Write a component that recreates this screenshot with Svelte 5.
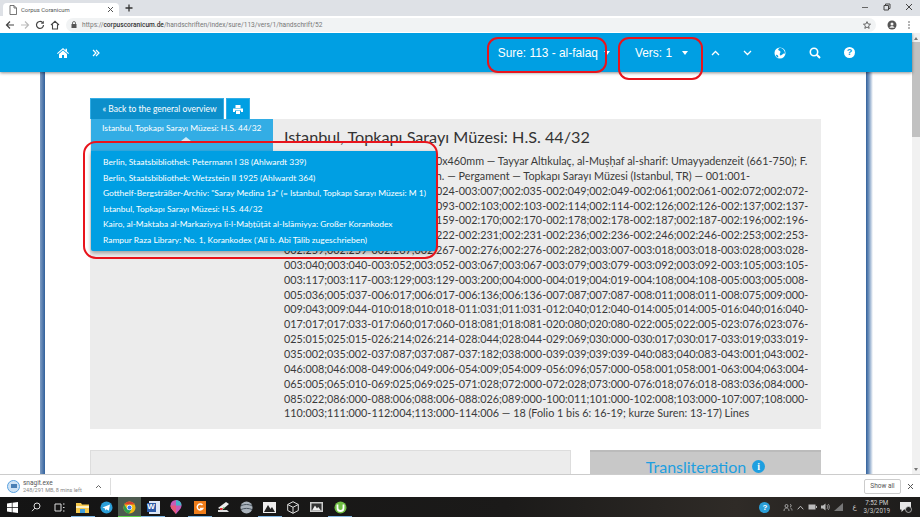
<script lang="ts">
const items = [
  "Berlin, Staatsbibliothek: Petermann I 38 (Ahlwardt 339)",
  "Berlin, Staatsbibliothek: Wetzstein II 1925 (Ahlwardt 364)",
  'Gotthelf-Bergsträßer-Archiv: "Saray Medina 1a" (= Istanbul, Topkapı Sarayı Müzesi: M 1)',
  "Istanbul, Topkapı Sarayı Müzesi: H.S. 44/32",
  "Kairo, al-Maktaba al-Markaziyya li-l-Maḫṭūṭāt al-Islāmiyya: Großer Korankodex",
  "Rampur Raza Library: No. 1, Korankodex (ʿAlī b. Abī Ṭālib zugeschrieben)",
];
const lines = [
  "H.S. 44/32 — 408 Blättern — 340x460mm — Tayyar Altıkulaç, al-Muṣḥaf al-sharif: Umayyadenzeit (661-750); F.",
  "1a-408b., Kufi, 7.-8. Jhd. n. Chr. n. — Pergament — Topkapı Sarayı Müzesi (Istanbul, TR) — 001:001-",
  "001:007;002:000-002:024;002:024-003:007;002:035-002:049;002:049-002:061;002:061-002:072;002:072-",
  "002:082;002:082-002:093;002:093-002:103;002:103-002:114;002:114-002:126;002:126-002:137;002:137-",
  "002:148;002:148-002:159;002:159-002:170;002:170-002:178;002:178-002:187;002:187-002:196;002:196-",
  "002:209;002:209-002:222;002:222-002:231;002:231-002:236;002:236-002:246;002:246-002:253;002:253-",
  "002:259;002:259-002:267;002:267-002:276;002:276-002:282;003:007-003:018;003:018-003:028;003:028-",
  "003:040;003:040-003:052;003:052-003:067;003:067-003:079;003:079-003:092;003:092-003:105;003:105-",
  "003:117;003:117-003:129;003:129-003:200;004:000-004:019;004:019-004:108;004:108-005:003;005:008-",
  "005:036;005:037-006:017;006:017-006:136;006:136-007:087;007:087-008:011;008:011-008:075;009:000-",
  "009:043;009:044-010:018;010:018-011:031;011:031-012:040;012:040-014:005;014:005-016:040;016:040-",
  "017:017;017:033-017:060;017:060-018:081;018:081-020:080;020:080-022:005;022:005-023:076;023:076-",
  "025:015;025:015-026:214;026:214-028:044;028:044-029:069;030:000-030:017;030:017-033:019;033:019-",
  "035:002;035:002-037:087;037:087-037:182;038:000-039:039;039:039-040:083;040:083-043:001;043:002-",
  "046:008;046:008-049:006;049:006-054:009;054:009-056:096;057:000-058:001;058:001-063:004;063:004-",
  "065:005;065:010-069:025;069:025-071:028;072:000-072:028;073:000-076:018;076:018-083:036;084:000-",
  "085:022;086:000-088:006;088:006-088:026;089:000-100:011;101:000-102:008;103:000-107:007;108:000-",
  "110:003;111:000-112:004;113:000-114:006 — 18 (Folio 1 bis 6: 16-19; kurze Suren: 13-17) Lines",
];
</script>

<div class="screen">
  <div class="tabstrip">
    <div class="tab">
      <svg width="8" height="10" viewBox="0 0 8 10"><path d="M1 .5h4l2.500 2.500v6.500h-6.500z M5 .5v2.500h2.500" fill="none" stroke="#555" stroke-width=".8"/></svg>
      <span class="tabtitle">Corpus Coranicum</span>
      <svg class="tabclose" width="7" height="7" viewBox="0 0 7 7"><path d="M1 1l5 5M6 1l-5 5" stroke="#555" stroke-width="1"/></svg>
    </div>
    <svg class="newtab" width="8" height="8" viewBox="0 0 8 8"><path d="M4 .5v7M.5 4h7" stroke="#333" stroke-width="1.300"/></svg>
    <div class="winctl">
      <svg width="8" height="8" viewBox="0 0 8 8"><path d="M1 4.500h6" stroke="#666" stroke-width="1"/></svg>
      <svg width="8" height="8" viewBox="0 0 8 8"><path d="M1 2.500h4.500v4.500h-4.500z M2.500 2.500v-1.500h4.500v4.500h-1.500" fill="none" stroke="#444" stroke-width="1"/></svg>
      <svg width="8" height="8" viewBox="0 0 8 8"><path d="M1 1l6 6M7 1l-6 6" stroke="#444" stroke-width="1"/></svg>
    </div>
  </div>

  <div class="toolbar">
    <svg width="10" height="10" viewBox="0 0 10 10"><path d="M9 5H1.500M5 1.500 1.500 5 5 8.500" fill="none" stroke="#444" stroke-width="1.200"/></svg>
    <svg width="10" height="10" viewBox="0 0 10 10"><path d="M1 5h7.500M5 1.500 8.500 5 5 8.500" fill="none" stroke="#bbb" stroke-width="1.200"/></svg>
    <svg width="10" height="10" viewBox="0 0 10 10"><path d="M8.500 5a3.500 3.500 0 1 1-1-2.500" fill="none" stroke="#444" stroke-width="1.200"/><path d="M8.800 .8v3h-3z" fill="#444"/></svg>
    <svg width="10" height="10" viewBox="0 0 10 10"><path d="M1 5 5 1.300 9 5M2.500 4.500v4.500h5v-4.500" fill="none" stroke="#444" stroke-width="1.100"/></svg>
    <div class="omnibox">
      <svg width="6" height="7" viewBox="0 0 6 7"><rect x=".5" y="3" width="5" height="4" fill="#555"/><path d="M1.500 3V2a1.500 1.500 0 0 1 3 0v1" fill="none" stroke="#555" stroke-width=".8"/></svg>
      <span class="url"><span class="scheme">https://</span><b>corpuscoranicum.de</b><span class="scheme">/handschriften/index/sure/113/vers/1/handschrift/52</span></span>
      <svg class="star" width="8" height="8" viewBox="0 0 10 10"><path d="M5 .8 6.300 3.700 9.400 4 7 6.100 7.700 9.200 5 7.600 2.300 9.200 3 6.100 .6 4 3.700 3.700z" fill="none" stroke="#444" stroke-width="1"/></svg>
    </div>
    <svg class="avatar" width="10" height="10" viewBox="0 0 10 10"><circle cx="5" cy="5" r="4.500" fill="#555"/><circle cx="5" cy="4" r="1.500" fill="#f5f5f5"/><path d="M2.300 7.800a3 3 0 0 1 5.400 0z" fill="#f5f5f5"/></svg>
    <svg width="4" height="10" viewBox="0 0 4 10"><circle cx="2" cy="2" r=".8" fill="#555"/><circle cx="2" cy="5" r=".8" fill="#555"/><circle cx="2" cy="8" r=".8" fill="#555"/></svg>
  </div>

  <div class="viewport">
    <div class="site">
      <nav class="nav">
        <svg class="home" width="12" height="10" viewBox="0 0 12 10"><path d="M6 0 0 5.200l.7.800L6 1.500 11.300 6l.7-.8-2-1.700V.8H8.500v1.400z M2 6 6 2.600 10 6v4H7V7H5v3H2z" fill="#fff"/></svg>
        <svg class="dbl" width="8" height="8" viewBox="0 0 8 8"><path d="M1 1l3 3-3 3M4 1l3 3-3 3" fill="none" stroke="#fff" stroke-width="1.200"/></svg>
        <span class="spacer"></span>
        <span class="sure">Sure: 113 - al-falaq</span>
        <i class="caret sure-caret"></i>
        <span class="vers">Vers: 1</span>
        <i class="caret vers-caret"></i>
        <svg class="chev-up" width="9" height="6" viewBox="0 0 9 6"><path d="M1 5l3.500-3.500L8 5" fill="none" stroke="#fff" stroke-width="1.300"/></svg>
        <svg class="chev-down" width="9" height="6" viewBox="0 0 9 6"><path d="M1 1l3.500 3.500L8 1" fill="none" stroke="#fff" stroke-width="1.300"/></svg>
        <svg class="globe" width="12" height="12" viewBox="0 0 12 12"><circle cx="6" cy="6" r="5.500" fill="#fff"/><path d="M6 .8C4 1.500 3.600 3 5 3.600c1.300.5 2 1.500 1 2.700-.6.800-.2 2 .7 2.200C8 8.300 9 6.300 10 6.500c.5 0 .8 0 1 .2C11 4 9 1 6 .8z M2 8c1-.5 2 .5 2.400 2 .1.500-.6.500-1 .2C2.600 9.500 2 8.800 2 8z" fill="#009fe3"/></svg>
        <svg class="search" width="12" height="12" viewBox="0 0 12 12"><circle cx="5" cy="5" r="3.700" fill="none" stroke="#fff" stroke-width="1.600"/><path d="M7.800 7.800 11 11" stroke="#fff" stroke-width="2"/></svg>
        <span class="help">?</span>
      </nav>

      <div class="columns">
        <div class="strip left"></div>
        <main class="page">
          <div class="actions">
            <button class="back"><span class="raquo">«</span> Back to the general overview</button>
            <button class="print" aria-label="print">
              <svg width="10" height="9" viewBox="0 0 10 9"><path d="M2.500 3V0h5v3z M0 3.500h10V7H8V5.500H2V7H0z M3 6h4v3H3z" fill="#fff"/></svg>
            </button>
          </div>
          <section class="panel">
            <div class="selector">
              <div class="selected">Istanbul, Topkapı Sarayı Müzesi: H.S. 44/32</div>
              <i class="notch"></i>
              <ul class="menu">
                {#each items as item}
                  <li>{item}</li>
                {/each}
              </ul>
            </div>
            <div class="info">
              <h1>Istanbul, Topkapı Sarayı Müzesi: H.S. 44/32</h1>
              {#each lines as line}
                <p>{line}</p>
              {/each}
            </div>
          </section>
          <div class="lower">
            <div class="facsimile"></div>
            <div class="translit">
              <span>Transliteration</span>
              <span class="info-dot">i</span>
            </div>
          </div>
        </main>
        <div class="strip right"></div>
      </div>
    </div>
    <div class="scrollbar">
      <i class="arrow up"></i>
      <div class="thumb"></div>
      <i class="arrow down"></i>
    </div>
    <div class="mark mark-sure"></div>
    <div class="mark mark-vers"></div>
    <div class="mark mark-menu"></div>
  </div>

  <div class="downloads">
    <div class="dl-icon"><i></i></div>
    <div class="dl-text">
      <span class="dl-name">snagit.exe</span>
      <span class="dl-size">248/291 MB, 8 mins left</span>
    </div>
    <svg width="7" height="5" viewBox="0 0 7 5"><path d="M1 4l2.500-2.500L6 4" fill="none" stroke="#666" stroke-width="1"/></svg>
    <span class="dl-sep"></span>
    <span class="spacer"></span>
    <span class="showall">Show all</span>
    <svg width="7" height="7" viewBox="0 0 7 7"><path d="M1 1l5 5M6 1l-5 5" stroke="#555" stroke-width="1"/></svg>
  </div>

  <footer class="taskbar">
    <div class="task"><svg width="11" height="11" viewBox="0 0 11 11"><path d="M0 1.500 4.800.8v4.300H0z M5.500.7 11 0v5.100H5.500z M0 5.800h4.800v4.400L0 9.500z M5.500 5.800H11V11l-5.500-.7z" fill="#fff"/></svg></div>
    <div class="task"><svg width="10" height="10" viewBox="0 0 10 10"><circle cx="6" cy="4" r="3" fill="none" stroke="#ddd" stroke-width="1"/><path d="M3.800 6.200 1 9.200" stroke="#ddd" stroke-width="1"/></svg></div>
    <div class="task"><svg width="11" height="9" viewBox="0 0 11 9"><path d="M1 1h6v7H1z M9 1h1.500M9 4.500h1.500M9 8h1.500" fill="none" stroke="#ddd" stroke-width="1"/></svg></div>
    <div class="task on"><svg width="13" height="11" viewBox="0 0 13 11"><path d="M0 1h5l1 1.500h7V11H0z" fill="#f5c84c"/><path d="M0 4h13v2H0z" fill="#fff3c4"/><path d="M4 7h5v4H4z" fill="#3f9fdc"/></svg></div>
    <div class="task"><svg width="13" height="13" viewBox="0 0 13 13"><circle cx="6.500" cy="6.500" r="6" fill="#2b9fd8"/><path d="M2.500 6.500 10 3.500 8.800 9.800 6.500 8.200 5.300 9.400 5 7.500z" fill="#fff"/></svg></div>
    <div class="task chrome"><svg width="13" height="13" viewBox="0 0 13 13"><circle cx="6.500" cy="6.500" r="6" fill="#f0b913"/><path d="M1.300 3.500A6 6 0 0 1 11.700 3.500H6.500z" fill="#d9412f"/><path d="M1.300 3.500A6 6 0 0 0 6 12.500L8.800 8H4z" fill="#2f9e4f"/><circle cx="6.500" cy="6.500" r="2.700" fill="#fff"/><circle cx="6.500" cy="6.500" r="2" fill="#3b78e7"/></svg></div>
    <div class="task on"><svg width="13" height="13" viewBox="0 0 13 13"><rect x="2" y="0" width="11" height="13" fill="#dce6f5"/><rect x="0" y="2" width="9" height="9" fill="#2b5aa8"/></svg><b class="word">W</b></div>
    <div class="task"><svg width="12" height="14" viewBox="0 0 12 14"><path d="M6 0a5.500 5.500 0 0 1 5.500 5.500C11.500 9 8 11 6 14 4 11 .5 9 .5 5.500A5.500 5.500 0 0 1 6 0z" fill="#c65bb8"/><path d="M6 0a5.500 5.500 0 0 1 5.500 5.500H6z" fill="#46b5c9"/><path d="M.5 5.500H6V14C4 11 .5 9 .5 5.500z" fill="#e85a7a"/></svg></div>
    <div class="task on"><svg width="12" height="13" viewBox="0 0 12 13"><rect width="12" height="13" fill="#ef7d1a"/><path d="M8.500 4a3 3 0 1 0 .3 3.500H6" fill="none" stroke="#fff" stroke-width="1.400"/></svg></div>
    <div class="task"><svg width="13" height="12" viewBox="0 0 13 12"><path d="M1 7 9 1l3 2-7 6z" fill="#eee"/><path d="M1 9h9l2 2H1z" fill="#ddd"/><path d="M3 7h3l-1 2H3z" fill="#d33"/><path d="M6 6l2 1-1 1z" fill="#3a3"/></svg></div>
    <div class="task"><svg width="13" height="13" viewBox="0 0 13 13"><circle cx="6.500" cy="6.500" r="6" fill="#a9b2bb"/><path d="M.8 5C4 3 9 3 12.200 5M1 8.500c3-1.500 8-1.500 11 0" fill="none" stroke="#495560" stroke-width="1"/></svg></div>
    <div class="task on"><svg width="13" height="11" viewBox="0 0 13 11"><rect width="13" height="11" fill="#eee"/><path d="M1 10 5 3l2.500 4L9 5l3 5z" fill="#222"/></svg></div>
    <div class="task"><svg width="12" height="13" viewBox="0 0 12 13"><path d="M6 .7 11.300 3.500v6L6 12.300.7 9.500v-6zM.7 3.500 6 6.300l5.300-2.800M6 6.300v6" fill="none" stroke="#ddd" stroke-width="1"/></svg></div>
    <div class="task"><svg width="13" height="10" viewBox="0 0 13 10"><rect width="13" height="10" fill="#ccc"/><rect x="1.500" y="1.500" width="10" height="7" fill="#333"/><path d="M2 8.500 5 3.500l2 3 1.200-1.500 2.800 3.500z" fill="#eee"/></svg></div>
    <div class="task on"><svg width="13" height="13" viewBox="0 0 13 13"><circle cx="6.500" cy="6.500" r="6" fill="#6fbe44"/><path d="M3.500 3.500v3.500a3 3 0 0 0 6 0v-3.500" fill="none" stroke="#fff" stroke-width="1.800"/></svg></div>
    <span class="spacer"></span>
    <div class="tray">
      <span class="tray-globe">?</span>
      <svg width="10" height="10" viewBox="0 0 10 10"><circle cx="3.500" cy="4" r="1.500" fill="none" stroke="#bbb" stroke-width=".8"/><path d="M1 9c0-2 1-3 2.500-3S6 7 6 9M7 2.500a1.200 1.200 0 1 1 0 2.400M7.500 6c1 .3 1.500 1.300 1.500 2.500" fill="none" stroke="#bbb" stroke-width=".8"/></svg>
      <svg width="7" height="5" viewBox="0 0 7 5"><path d="M.7 4.300 3.500 1.200 6.300 4.300" fill="none" stroke="#ccc" stroke-width=".9"/></svg>
      <svg width="9" height="6" viewBox="0 0 9 6"><rect x=".5" y=".5" width="7" height="5" fill="#bbb"/><rect x="8" y="2" width="1" height="2" fill="#bbb"/></svg>
      <svg width="9" height="8" viewBox="0 0 9 8"><path d="M0 2.500h2L4.500 .5v7L2 5.500H0z" fill="#bbb"/><path d="M5.800 2a2.500 2.500 0 0 1 0 4M7 1a4 4 0 0 1 0 6" fill="none" stroke="#bbb" stroke-width=".7"/></svg>
      <svg width="9" height="8" viewBox="0 0 9 8"><path d="M0 8 9 0v8z" fill="#777"/></svg>
      <span class="lang">ع</span>
      <div class="clock"><span>7:52 PM</span><span>3/3/2019</span></div>
      <svg class="notif" width="12" height="11" viewBox="0 0 12 11"><path d="M0 0h11v7.500H4L1.500 10V7.500H0z" fill="#e6e6e6"/><circle cx="8.500" cy="7.500" r="3" fill="#222" stroke="#ddd" stroke-width=".7"/></svg>
    </div>
  </footer>
</div>

<style>
  :global(body) {
    margin: 0;
    overflow: hidden;
  }
  .screen {
    width: 920px;
    height: 517px;
    display: flex;
    flex-direction: column;
    overflow: hidden;
    background: #fff;
    font-family: Lato, sans-serif;
  }
  .spacer {
    flex: 1;
  }

  /* browser chrome */
  .tabstrip {
    height: 16px;
    flex-shrink: 0;
    display: flex;
    align-items: flex-end;
    background: #dee1e6;
    padding-left: 3px;
  }
  .tab {
    width: 116px;
    height: 13px;
    box-sizing: border-box;
    background: #fff;
    border-radius: 4px 4px 0 0;
    display: flex;
    align-items: center;
    padding: 0 5px 0 6px;
    gap: 3px;
  }
  .tabtitle {
    font: 5.900px Roboto, sans-serif;
    color: #555;
    flex: 1;
    padding-left: 1px;
  }
  .newtab {
    margin: 0 0 4px 6px;
  }
  .winctl {
    margin-left: auto;
    align-self: center;
    display: flex;
    gap: 14px;
    padding: 0 7px 3px 0;
  }
  .toolbar {
    height: 17px;
    flex-shrink: 0;
    display: flex;
    align-items: center;
    gap: 5px;
    padding: 0 9px 0 5px;
    background: #fff;
  }
  .omnibox {
    flex: 1;
    height: 14px;
    margin: 0 6px 0 1px;
    border-radius: 7px;
    background: #f1f3f4;
    display: flex;
    align-items: center;
    padding: 0 5px;
    gap: 5px;
    min-width: 0;
  }
  .url {
    font: 6.600px Roboto, sans-serif;
    color: #333;
    flex: 1;
    white-space: nowrap;
  }
  .url b {
    font-weight: 500;
  }
  .scheme {
    color: #777;
  }
  .avatar {
    margin-right: 5px;
  }

  /* page */
  .viewport {
    position: relative;
    height: 441px;
    flex-shrink: 0;
    display: flex;
    overflow: hidden;
  }
  .site {
    flex: 1;
    min-width: 0;
    display: flex;
    flex-direction: column;
  }
  .nav {
    height: 39px;
    flex-shrink: 0;
    display: flex;
    align-items: center;
    background: #009fe3;
    box-shadow: 0 1px 3px rgba(0, 0, 0, 0.45);
    color: #fff;
    font: 11.900px "Liberation Sans", sans-serif;
    position: relative;
    z-index: 2;
  }
  .home {
    margin-left: 57px;
  }
  .dbl {
    margin-left: 23px;
  }
  .sure-caret {
    margin: 0 25px 0 6px;
  }
  .vers-caret {
    margin: 0 23px 0 10px;
  }
  .caret {
    display: block;
    width: 0;
    height: 0;
    border-left: 3.500px solid transparent;
    border-right: 3.500px solid transparent;
    border-top: 4px solid #fff;
  }
  .chev-up {
    margin-right: 23px;
  }
  .chev-down {
    margin-right: 22px;
  }
  .globe {
    margin-right: 23px;
  }
  .search {
    margin-right: 23px;
  }
  .help {
    width: 11px;
    height: 11px;
    margin-right: 57px;
    border-radius: 50%;
    background: #fff;
    color: #009fe3;
    font: bold 9px/11px "Liberation Sans", sans-serif;
    text-align: center;
  }
  .columns {
    flex: 1;
    min-height: 0;
    display: flex;
    padding: 0 39px 0 40px;
  }
  .strip {
    flex-shrink: 0;
  }
  .strip.left {
    width: 5px;
    background: linear-gradient(90deg, #7f9dc4, #31609b);
  }
  .strip.right {
    width: 7px;
    background: linear-gradient(90deg, #31609b, #6f92bd 40%, #fff);
  }
  .page {
    flex: 1;
    min-width: 0;
    padding: 26px 45px 0;
    overflow: hidden;
  }
  .actions {
    display: flex;
    gap: 2px;
    height: 21px;
  }
  button {
    border: 1px solid #33ade5;
    border-bottom: 0;
    padding: 0;
    color: #fff;
    font: 8.500px Lato, sans-serif;
  }
  .back {
    width: 134px;
    padding-left: 5px;
    background: #0c8fcb;
  }
  .print {
    width: 24px;
    background: #009fe3;
    display: flex;
    align-items: center;
    justify-content: center;
  }

  .panel {
    display: flex;
    width: 731px;
    height: 310px;
    background: #ececec;
  }
  .selector {
    position: relative;
    width: 183px;
    flex-shrink: 0;
  }
  .selected {
    height: 32px;
    margin-left: 1px;
    padding: 4px 0 0 11px;
    box-sizing: border-box;
    background: #33ade5;
    color: #fff;
    font-size: 8.450px;
    line-height: 11px;
    white-space: nowrap;
  }
  .notch {
    position: absolute;
    left: 91px;
    top: 18px;
    border-left: 5px solid transparent;
    border-right: 5px solid transparent;
    border-bottom: 4px solid #cfeaf8;
    z-index: 3;
  }
  .menu {
    position: absolute;
    z-index: 3;
    left: 1px;
    top: 32px;
    width: 345px;
    margin: 0;
    padding: 4px 0 3px;
    box-sizing: border-box;
    list-style: none;
    background: #009fe3;
    border-radius: 0 0 2px 2px;
    box-shadow: 0 2px 4px rgba(0, 0, 0, 0.35);
    color: #fff;
    font-size: 8.450px;
  }
  .menu li {
    height: 15.500px;
    line-height: 15.500px;
    padding-left: 12px;
    white-space: nowrap;
  }
  .info {
    padding-left: 11px;
    min-width: 0;
  }
  h1 {
    margin: 7px 0 6px;
    font-size: 16.200px;
    font-weight: 400;
    line-height: 22px;
    color: #333;
    white-space: nowrap;
  }
  .info p {
    margin: 0;
    height: 14.850px;
    line-height: 14.850px;
    font-size: 10.800px;
    color: #3a3a3a;
    white-space: nowrap;
  }
  .lower {
    display: flex;
    gap: 19px;
    margin-top: 21px;
    height: 30px;
    width: 731px;
  }
  .facsimile {
    width: 481px;
    box-sizing: border-box;
    background: #ececec;
    border: 1px solid #ddd;
  }
  .translit {
    flex: 1;
    background: #c8c8c8;
    border-top: 2px solid #bbb;
    display: flex;
    justify-content: center;
    gap: 6px;
    padding-top: 5px;
    color: #1e9fe0;
    font-size: 16px;
    line-height: 20px;
  }
  .info-dot {
    width: 13px;
    height: 13px;
    margin-top: 3px;
    border-radius: 50%;
    background: #1e9fe0;
    color: #fff;
    font: bold 10px/13px "Liberation Serif", serif;
    text-align: center;
  }

  .scrollbar {
    width: 8px;
    flex-shrink: 0;
    background: #f1f1f1;
    display: flex;
    flex-direction: column;
    align-items: center;
    padding-top: 4px;
    box-sizing: border-box;
  }
  .thumb {
    width: 100%;
    height: 95px;
    margin-top: 2px;
    background: #c1c1c1;
  }
  .arrow {
    display: block;
    width: 0;
    border-left: 2.500px solid transparent;
    border-right: 2.500px solid transparent;
  }
  .arrow.up {
    border-bottom: 3px solid #777;
  }
  .arrow.down {
    margin-top: auto;
    margin-bottom: 3px;
    border-top: 3px solid #777;
  }

  /* red annotations drawn over the capture */
  .mark {
    position: absolute;
    z-index: 5;
    box-sizing: border-box;
    border: 2px solid #e8141c;
    border-radius: 11px;
  }
  .mark-sure {
    left: 487px;
    top: 4px;
    width: 120px;
    height: 36px;
  }
  .mark-vers {
    left: 618px;
    top: 4px;
    width: 85px;
    height: 43px;
  }
  .mark-menu {
    left: 83px;
    top: 108px;
    width: 355px;
    height: 118px;
    border-radius: 13px;
  }

  /* download shelf */
  .downloads {
    height: 23px;
    flex-shrink: 0;
    box-sizing: border-box;
    border-top: 1px solid #ccc;
    background: #fff;
    display: flex;
    align-items: center;
    padding: 0 6px 0 7px;
  }
  .dl-icon {
    width: 13px;
    height: 13px;
    border-radius: 50%;
    background: #cfe3f5;
    border: 1px solid #5aa2e0;
    box-sizing: border-box;
    display: flex;
    align-items: center;
    justify-content: center;
    margin-right: 3px;
  }
  .dl-icon i {
    width: 6px;
    height: 4px;
    background: #4a80b5;
  }
  .dl-text {
    width: 72px;
    display: flex;
    flex-direction: column;
    color: #555;
    line-height: 7px;
  }
  .dl-name {
    font: 6.500px/8px Roboto, sans-serif;
  }
  .dl-size {
    font: 5.500px/7px Roboto, sans-serif;
    color: #888;
    white-space: nowrap;
  }
  .dl-sep {
    width: 1px;
    height: 17px;
    margin-left: 8px;
    background: #ddd;
  }
  .showall {
    width: 37px;
    height: 15px;
    margin-right: 6px;
    border: 1px solid #ccc;
    border-radius: 2px;
    box-sizing: border-box;
    font: 6.500px/13px Roboto, sans-serif;
    color: #555;
    text-align: center;
  }

  /* windows taskbar */
  .taskbar {
    height: 20px;
    flex-shrink: 0;
    display: flex;
    align-items: center;
    background: linear-gradient(90deg, #141414, #1b1a19 55%, #2f2b27 80%, #1d1c1b);
    padding-left: 1px;
  }
  .task {
    position: relative;
    width: 23.400px;
    height: 100%;
    display: flex;
    align-items: center;
    justify-content: center;
  }
  .task.on {
    box-shadow: inset 0 -1px 0 #7fb5e0;
  }
  .task.chrome {
    background: #4d5a4f;
    box-shadow: inset 0 -1px 0 #5ed24f;
  }
  .word {
    position: absolute;
    left: 6px;
    top: 5px;
    font: bold 8px/10px "Liberation Sans", sans-serif;
    color: #fff;
  }
  .tray {
    display: flex;
    align-items: center;
    gap: 4px;
    padding-right: 9px;
    color: #ccc;
  }
  .tray-globe {
    width: 11px;
    height: 11px;
    margin-right: 9px;
    border-radius: 50%;
    background: #2b9fd8;
    color: #fff;
    font: bold 8px/11px "Liberation Sans", sans-serif;
    text-align: center;
  }
  .lang {
    font: 7px "DejaVu Sans", sans-serif;
    margin: 0 3px 0 5px;
  }
  .clock {
    display: flex;
    flex-direction: column;
    align-items: center;
    font: 6.300px/8px Roboto, sans-serif;
    margin-right: 6px;
  }
  .notif {
    margin-right: -1px;
  }
</style>
